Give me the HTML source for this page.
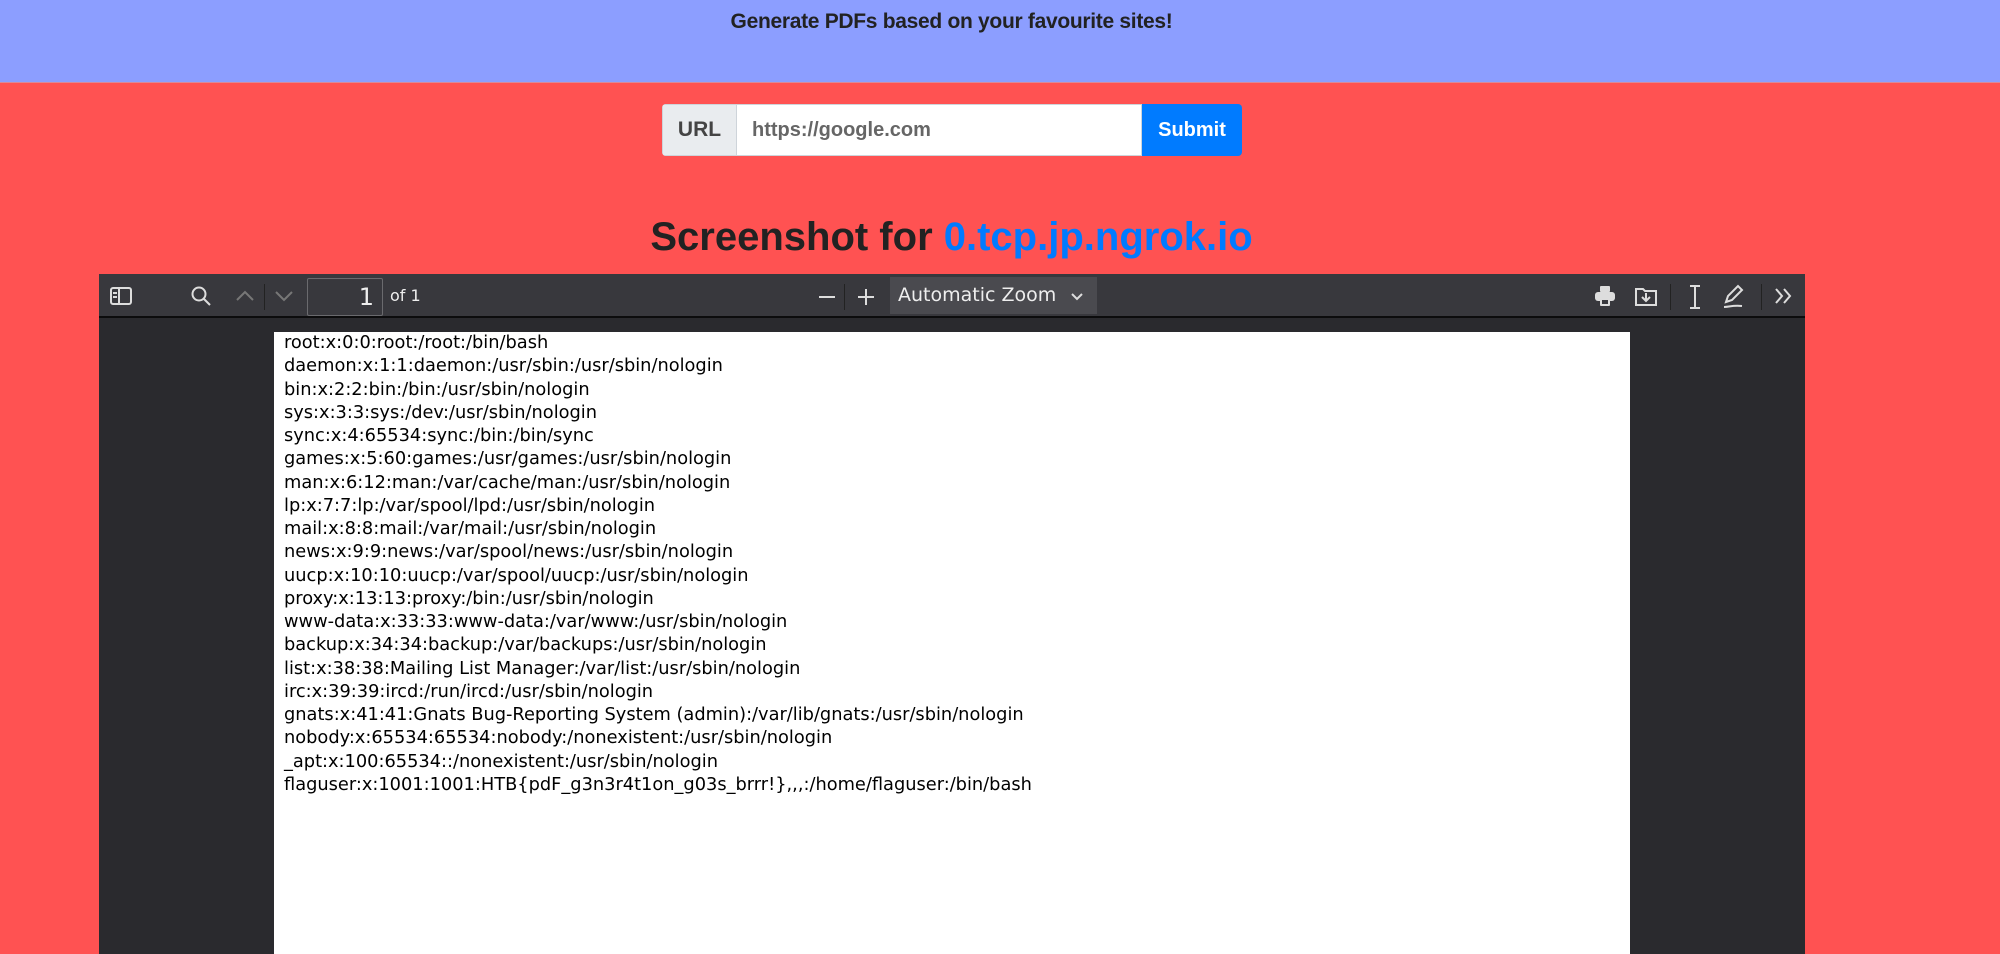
<!DOCTYPE html>
<html><head><meta charset="utf-8">
<style>
*{margin:0;padding:0;box-sizing:border-box}
body{width:2000px;height:954px;overflow:hidden;background:#ff5252;font-family:"Liberation Sans",sans-serif;position:relative}
.hdr{position:absolute;left:0;top:0;width:2000px;height:83px;background:#8c9eff;border-bottom:1px solid #d98a9a}
.hdr h1{position:absolute;top:10px;left:0;width:1903px;text-align:center;font-size:21px;font-weight:bold;color:#222;letter-spacing:-0.3px}
.ig{position:absolute;left:662px;top:104px;width:580px;height:52px;display:flex;border-radius:4px;overflow:hidden}
.ig .a{width:75px;background:#e9ecef;border:1px solid #ced4da;color:#444;font-weight:bold;font-size:21px;display:flex;align-items:center;justify-content:center}
.ig .i{flex:1;background:#fff;border:1px solid #ced4da;border-left:0;color:#666;font-size:20px;display:flex;align-items:center;padding-left:15px;font-weight:bold}
.ig .b{width:100px;background:#007bff;color:#fff;font-weight:bold;font-size:20px;display:flex;align-items:center;justify-content:center}
.h2{position:absolute;top:215px;left:0;width:1903px;text-align:center;font-size:40px;font-weight:bold;color:#222}
.h2 span{color:#007bff}
.v{position:absolute;left:99px;top:274px;width:1706px;height:680px;background:#2a2a2e;overflow:hidden}
.tb{position:absolute;left:0;top:0;width:100%;height:44px;background:#38383d;border-bottom:2px solid #0c0c0d}
.pg{position:absolute;left:175px;top:58px;width:1356px;height:640px;background:#fff}
.pg pre{font-family:"DejaVu Sans",sans-serif;font-size:17.8px;line-height:23.25px;color:#000;position:absolute;left:10px;top:-1px;white-space:pre}
svg{position:absolute}
.pi{position:absolute;left:208px;top:4px;width:76px;height:38px;border:1px solid #6a6a6e;border-radius:2px;background:#38383d;color:#eee;font-size:24px;text-align:right;padding-right:8px;line-height:36px;font-family:"DejaVu Sans",sans-serif}
.of{position:absolute;left:291px;top:12px;color:#eee;font-size:16px;font-family:"DejaVu Sans",sans-serif}
.zs{position:absolute;left:791px;top:3px;width:207px;height:37px;background:#4a4a4f;color:#eee;font-size:19px;line-height:37px;padding-left:8px;font-family:"DejaVu Sans",sans-serif}
.sep{position:absolute;top:10px;width:1px;height:26px;background:#222}
</style></head><body>
<div class="hdr"><h1>Generate PDFs based on your favourite sites!</h1></div>
<div class="ig"><div class="a">URL</div><div class="i">https://google.com</div><div class="b">Submit</div></div>
<div class="h2">Screenshot for <span>0.tcp.jp.ngrok.io</span></div>
<div class="v">
<div class="tb">
<svg style="left:10px;top:12px" width="24" height="20" viewBox="0 0 24 20" fill="none" stroke="#ddd" stroke-width="2"><rect x="2" y="2" width="20" height="16" rx="2"/><line x1="10" y1="2" x2="10" y2="18"/><line x1="4" y1="7" x2="8" y2="7"/><line x1="4" y1="11" x2="8" y2="11"/></svg>
<svg style="left:91px;top:11px" width="22" height="22" viewBox="0 0 22 22" fill="none" stroke="#ddd" stroke-width="2"><circle cx="9" cy="9" r="6.5"/><line x1="14" y1="14" x2="20" y2="20"/></svg>
<svg style="left:136px;top:15px" width="20" height="14" viewBox="0 0 20 14" fill="none" stroke="#777" stroke-width="2"><polyline points="2,11 10,3 18,11"/></svg>
<div class="sep" style="left:165px"></div>
<svg style="left:175px;top:15px" width="20" height="14" viewBox="0 0 20 14" fill="none" stroke="#777" stroke-width="2"><polyline points="2,3 10,11 18,3"/></svg>
<div class="pi">1</div>
<div class="of">of 1</div>
<svg style="left:718px;top:13px" width="20" height="20" viewBox="0 0 20 20" stroke="#ddd" stroke-width="2"><line x1="2" y1="10" x2="18" y2="10"/></svg>
<div class="sep" style="left:745px"></div>
<svg style="left:757px;top:13px" width="20" height="20" viewBox="0 0 20 20" stroke="#ddd" stroke-width="2"><line x1="2" y1="10" x2="18" y2="10"/><line x1="10" y1="2" x2="10" y2="18"/></svg>
<div class="zs">Automatic Zoom<svg style="left:180px;top:15px" width="14" height="9" viewBox="0 0 14 9" fill="none" stroke="#ddd" stroke-width="2"><polyline points="2,2 7,7 12,2"/></svg></div>
<svg style="left:1495px;top:11px" width="22" height="22" viewBox="0 0 22 22" fill="#ddd"><rect x="6" y="1" width="10" height="6" rx="1"/><rect x="1" y="7" width="20" height="9" rx="3"/><rect x="6" y="13" width="10" height="8" rx="1"/><rect x="8" y="15" width="6" height="4" fill="#38383d"/></svg>
<svg style="left:1535px;top:11px" width="24" height="22" viewBox="0 0 24 22" fill="none" stroke="#ddd" stroke-width="2"><path d="M2 4h7l2 2h11v14H2z"/><line x1="12" y1="8" x2="12" y2="16"/><polyline points="8,12 12,16 16,12"/></svg>
<div class="sep" style="left:1571px"></div>
<svg style="left:1588px;top:10px" width="16" height="26" viewBox="0 0 16 26" fill="none" stroke="#ddd" stroke-width="2"><path d="M3 2h10M8 2v22M3 24h10"/></svg>
<svg style="left:1622px;top:10px" width="24" height="26" viewBox="0 0 24 26" fill="none" stroke="#ddd" stroke-width="2"><path d="M5 18l2-6 10-10 4 4-10 10z"/><path d="M3 23c6 0 8-2 18-1"/></svg>
<div class="sep" style="left:1662px"></div>
<svg style="left:1674px;top:12px" width="20" height="20" viewBox="0 0 20 20" fill="none" stroke="#ddd" stroke-width="2"><polyline points="3,3 9,10 3,17"/><polyline points="11,3 17,10 11,17"/></svg>
</div>
<div class="pg"><pre>root:x:0:0:root:/root:/bin/bash
daemon:x:1:1:daemon:/usr/sbin:/usr/sbin/nologin
bin:x:2:2:bin:/bin:/usr/sbin/nologin
sys:x:3:3:sys:/dev:/usr/sbin/nologin
sync:x:4:65534:sync:/bin:/bin/sync
games:x:5:60:games:/usr/games:/usr/sbin/nologin
man:x:6:12:man:/var/cache/man:/usr/sbin/nologin
lp:x:7:7:lp:/var/spool/lpd:/usr/sbin/nologin
mail:x:8:8:mail:/var/mail:/usr/sbin/nologin
news:x:9:9:news:/var/spool/news:/usr/sbin/nologin
uucp:x:10:10:uucp:/var/spool/uucp:/usr/sbin/nologin
proxy:x:13:13:proxy:/bin:/usr/sbin/nologin
www-data:x:33:33:www-data:/var/www:/usr/sbin/nologin
backup:x:34:34:backup:/var/backups:/usr/sbin/nologin
list:x:38:38:Mailing List Manager:/var/list:/usr/sbin/nologin
irc:x:39:39:ircd:/run/ircd:/usr/sbin/nologin
gnats:x:41:41:Gnats Bug-Reporting System (admin):/var/lib/gnats:/usr/sbin/nologin
nobody:x:65534:65534:nobody:/nonexistent:/usr/sbin/nologin
_apt:x:100:65534::/nonexistent:/usr/sbin/nologin
flaguser:x:1001:1001:HTB{pdF_g3n3r4t1on_g03s_brrr!},,,:/home/flaguser:/bin/bash</pre></div>
</div>
</body></html>
